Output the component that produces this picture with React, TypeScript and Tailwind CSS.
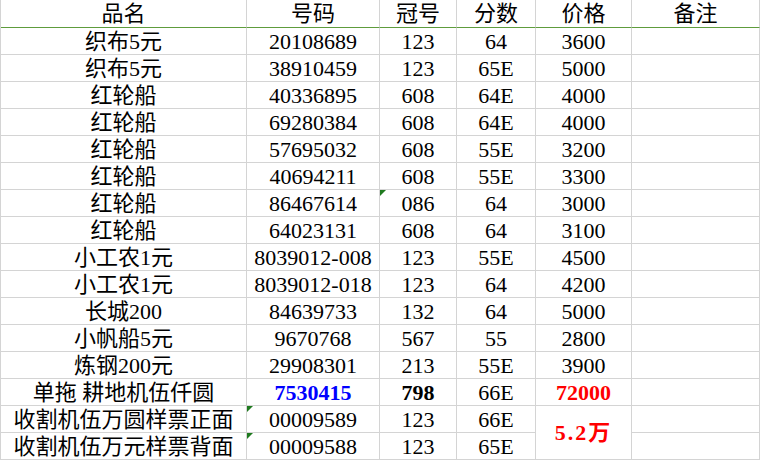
import React from 'react'

type Row = {
  name: string
  code: string
  crown: string
  score: string
  price?: string
  codeClass?: string
  crownClass?: string
  priceClass?: string
  flagCode?: boolean
  flagCrown?: boolean
}

const rows: Row[] = [
  { name: '织布5元', code: '20108689', crown: '123', score: '64', price: '3600' },
  { name: '织布5元', code: '38910459', crown: '123', score: '65E', price: '5000' },
  { name: '红轮船', code: '40336895', crown: '608', score: '64E', price: '4000' },
  { name: '红轮船', code: '69280384', crown: '608', score: '64E', price: '4000' },
  { name: '红轮船', code: '57695032', crown: '608', score: '55E', price: '3200' },
  { name: '红轮船', code: '40694211', crown: '608', score: '55E', price: '3300' },
  { name: '红轮船', code: '86467614', crown: '086', score: '64', price: '3000', flagCrown: true },
  { name: '红轮船', code: '64023131', crown: '608', score: '64', price: '3100' },
  { name: '小工农1元', code: '8039012-008', crown: '123', score: '55E', price: '4500' },
  { name: '小工农1元', code: '8039012-018', crown: '123', score: '64', price: '4200' },
  { name: '长城200', code: '84639733', crown: '132', score: '64', price: '5000' },
  { name: '小帆船5元', code: '9670768', crown: '567', score: '55', price: '2800' },
  { name: '炼钢200元', code: '29908301', crown: '213', score: '55E', price: '3900' },
  {
    name: '单拖 耕地机伍仟圆',
    code: '7530415',
    crown: '798',
    score: '66E',
    price: '72000',
    codeClass: 'font-bold text-[#0000ff]',
    crownClass: 'font-bold',
    priceClass: 'font-bold text-[#ff0000]',
  },
  { name: '收割机伍万圆样票正面', code: '00009589', crown: '123', score: '66E', flagCode: true },
  { name: '收割机伍万元样票背面', code: '00009588', crown: '123', score: '65E', flagCode: true },
]

const cell = 'relative flex items-end justify-center border-r border-b border-[#d4d4d4] h-[27px] leading-[24px] whitespace-nowrap'

const Flag = () => (
  <span className="absolute left-0 top-0 w-0 h-0 border-t-[6px] border-r-[6px] border-t-[#1f7a1f] border-r-transparent" />
)

export default function App() {
  return (
    <div
      className="w-[761px] h-[461px] bg-white text-black text-[22px] overflow-hidden"
      style={{ fontFamily: '"Liberation Serif", "Noto Sans CJK SC", serif' }}
    >
      <div className="grid grid-cols-[246px_133px_77px_79px_96px_128px] border-l border-[#d4d4d4] w-[760px]">
        {['品名', '号码', '冠号', '分数', '价格', '备注'].map((h) => (
          <div
            key={h}
            className="flex items-end justify-center border-r border-[#d4d4d4] border-b border-b-[#5e9c3c] h-[28px] leading-[26px]"
          >
            {h}
          </div>
        ))}
        {rows.map((r, i) => (
          <React.Fragment key={i}>
            <div className={cell}>{r.name}</div>
            <div className={`${cell} ${r.codeClass ?? ''}`}>
              {r.flagCode && <Flag />}
              {r.code}
            </div>
            <div className={`${cell} ${r.crownClass ?? ''}`}>
              {r.flagCrown && <Flag />}
              {r.crown}
            </div>
            <div className={cell}>{r.score}</div>
            {i < 14 && <div className={`${cell} ${r.priceClass ?? ''}`}>{r.price}</div>}
            {i === 14 && (
              <div className="row-span-2 flex items-center justify-center border-r border-b border-[#d4d4d4] font-bold text-[#ff0000] tracking-[2px]">
                5.2万
              </div>
            )}
            <div className={cell}></div>
          </React.Fragment>
        ))}
      </div>
    </div>
  )
}
